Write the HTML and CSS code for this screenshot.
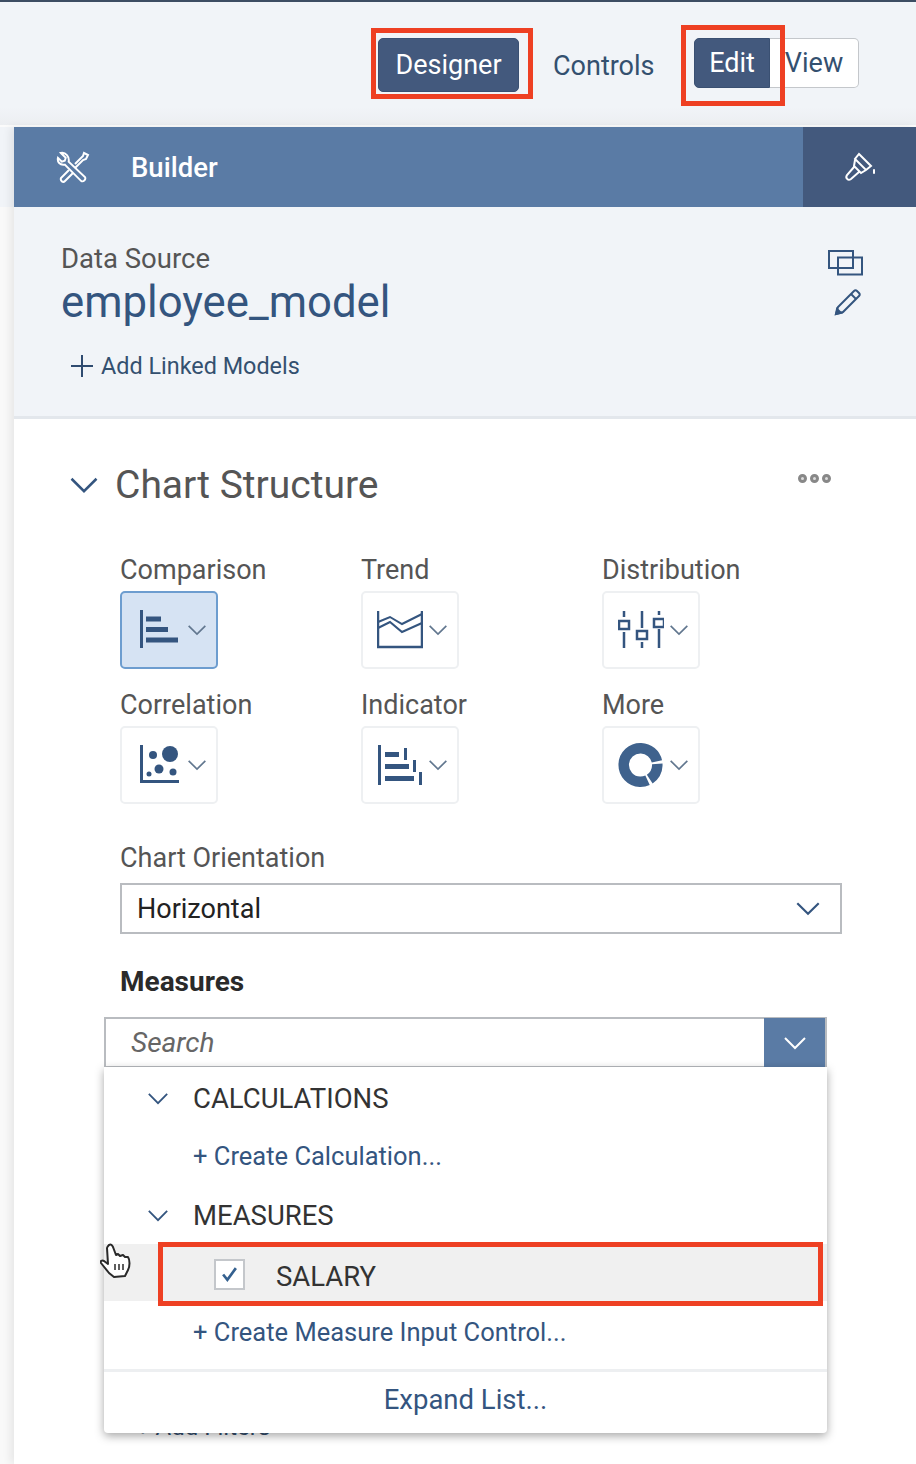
FILE: index.html
```html
<!DOCTYPE html>
<html lang="en">
<head>
    <meta charset="UTF-8">
    <meta name="viewport" content="width=device-width, initial-scale=1.0">
    <title>Chart Builder</title>
    <link rel="stylesheet" href="styles.css">
</head>
<body>
    <svg class="icon-defs" width="0" height="0">
        <symbol id="chev" viewBox="0 0 24 14"><path d="M2 2l10 10L22 2" fill="none" stroke="currentColor" stroke-width="2"/></symbol>
    </svg>

    <header class="topbar">
        <div class="marked marked-designer">
            <button class="btn-dark btn-designer">Designer</button>
        </div>
        <span class="top-link">Controls</span>
        <div class="segmented">
            <button class="seg seg-edit">Edit</button>
            <button class="seg seg-view">View</button>
            <span class="red-box red-edit"></span>
        </div>
    </header>

    <main class="panel">
        <div class="builder-bar">
            <svg class="tools-icon" viewBox="0 0 34 32" fill="none" stroke="#fff" stroke-width="2">
                <path d="M4 2l5 5-1 3-3 1-4-4c-1 4 2 8 7 7l17 17c2 1 5-1 4-4L12 11C13 6 9 1 4 2z" transform="translate(1 0) scale(.97)"/>
                <path d="M19 13l8-8 1-3 4 2-2 4-3 1-8 8M13 19l-8 8c-1 3 2 5 4 3l8-8"/>
            </svg>
            <span class="builder-title">Builder</span>
            <div class="brush-tab">
                <svg class="brush-icon" viewBox="0 0 32 32" fill="none" stroke="#fff" stroke-width="2">
                    <path d="M15 3l12 12-5 4-11-11zM11 9l-1 6 7 7 5-3M10 16l-7 8c-2 3 1 6 4 4l8-7"/>
                    <path d="M30 19v3" stroke-linecap="round"/>
                </svg>
            </div>
        </div>

        <section class="source">
            <div class="source-text">
                <div class="source-label">Data Source</div>
                <div class="source-name">employee_model</div>
                <div class="add-linked">
                    <svg class="plus-icon" viewBox="0 0 22 22"><path d="M11 0v22M0 11h22" stroke="#2f4b70" stroke-width="2"/></svg>
                    <span>Add Linked Models</span>
                </div>
            </div>
            <div class="source-actions">
                <svg class="copy-icon" viewBox="0 0 36 28" fill="none" stroke="#34557f" stroke-width="2">
                    <rect x="1" y="2" width="24" height="17"/>
                    <rect x="10" y="8.500" width="24" height="17"/>
                </svg>
                <svg class="pencil-icon" viewBox="0 0 28 28" fill="none" stroke="#34557f" stroke-width="2">
                    <path d="M2 26l2-7L20 3c1-1 2-1 3 0l2 2c1 1 1 2 0 3L9 24z"/>
                    <path d="M17 6l5 5"/>
                    <path d="M2 26l1-5 4 4z" fill="#34557f"/>
                </svg>
            </div>
        </section>

        <section class="structure">
            <div class="structure-head">
                <svg class="head-chev"><use href="#chev"/></svg>
                <h2>Chart Structure</h2>
                <div class="more-dots"><i></i><i></i><i></i></div>
            </div>

            <div class="type-grid">
                <div class="type">
                    <div class="type-label">Comparison</div>
                    <div class="tile tile-on">
                        <svg class="tile-icon" viewBox="0 0 40 40" fill="#34557f">
                            <rect x="0" y="0" width="3" height="38"/>
                            <rect x="6" y="6.500" width="15" height="5"/>
                            <rect x="6" y="17" width="22" height="5"/>
                            <rect x="6" y="27.500" width="32" height="5"/>
                        </svg>
                        <svg class="tile-chev"><use href="#chev"/></svg>
                    </div>
                </div>
                <div class="type">
                    <div class="type-label">Trend</div>
                    <div class="tile tile-wide">
                        <svg class="tile-icon" viewBox="0 0 46 40" fill="none" stroke="#34557f" stroke-width="2.500">
                            <path d="M1 1v36h44V1"/>
                            <path d="M1 12l12-5 12 7 20-10" stroke-width="2"/>
                            <path d="M1 18l12-6 12 10 20-9" stroke-width="2"/>
                        </svg>
                        <svg class="tile-chev"><use href="#chev"/></svg>
                    </div>
                </div>
                <div class="type">
                    <div class="type-label">Distribution</div>
                    <div class="tile tile-wide">
                        <svg class="tile-icon" viewBox="0 0 46 40" fill="none" stroke="#34557f" stroke-width="2.500">
                            <path d="M6 1v6M6 22v16M24 1v17M24 32v6M41 1v4M41 19v19"/>
                            <rect x="1" y="11" width="10" height="8"/>
                            <rect x="19" y="21" width="10" height="8"/>
                            <rect x="36" y="9" width="10" height="8"/>
                        </svg>
                        <svg class="tile-chev"><use href="#chev"/></svg>
                    </div>
                </div>
                <div class="type">
                    <div class="type-label">Correlation</div>
                    <div class="tile">
                        <svg class="tile-icon" viewBox="0 0 40 40" fill="#34557f">
                            <path d="M0 0h3v35h36v3H0z"/>
                            <circle cx="13" cy="10" r="4"/>
                            <circle cx="30" cy="9" r="8"/>
                            <circle cx="19" cy="24" r="4.500"/>
                            <circle cx="9" cy="29" r="2.500"/>
                            <circle cx="33" cy="27" r="3.500"/>
                        </svg>
                        <svg class="tile-chev"><use href="#chev"/></svg>
                    </div>
                </div>
                <div class="type">
                    <div class="type-label">Indicator</div>
                    <div class="tile tile-wide">
                        <svg class="tile-icon" viewBox="0 0 46 40" fill="#34557f">
                            <rect x="1" y="0" width="3" height="40"/>
                            <rect x="8" y="7" width="14" height="5"/>
                            <rect x="27" y="3" width="3" height="12"/>
                            <rect x="8" y="19" width="24" height="5"/>
                            <rect x="36" y="15" width="3" height="12"/>
                            <rect x="8" y="31" width="29" height="5"/>
                            <rect x="42" y="27" width="3" height="13"/>
                        </svg>
                        <svg class="tile-chev"><use href="#chev"/></svg>
                    </div>
                </div>
                <div class="type">
                    <div class="type-label">More</div>
                    <div class="tile tile-wide">
                        <svg class="tile-icon donut" viewBox="0 0 46 46" fill="none" stroke="#3f628d" stroke-width="10.500">
                            <circle cx="22.500" cy="23" r="16.800" stroke-dasharray="22 2.500 17.600 2.500 61" transform="rotate(-88 22.500 23)"/>
                        </svg>
                        <svg class="tile-chev"><use href="#chev"/></svg>
                    </div>
                </div>
            </div>

            <div class="field-label">Chart Orientation</div>
            <div class="select">
                <span>Horizontal</span>
                <svg class="select-chev"><use href="#chev"/></svg>
            </div>

            <div class="measures-label">Measures</div>

            <div class="measures">
                <div class="search">
                    <span class="search-text">Search</span>
                    <span class="search-btn"><svg class="search-chev"><use href="#chev"/></svg></span>
                </div>
                <div class="add-filters">+ Add Filters</div>

                <div class="popup">
                    <div class="popup-group">
                        <svg class="group-chev"><use href="#chev"/></svg>
                        <span>CALCULATIONS</span>
                    </div>
                    <div class="popup-link">+ Create Calculation...</div>
                    <div class="popup-group group-measures">
                        <svg class="group-chev"><use href="#chev"/></svg>
                        <span>MEASURES</span>
                    </div>
                    <div class="popup-item">
                        <span class="checkbox">
                            <svg viewBox="0 0 16 14" class="check-icon"><path d="M2 7l4 5 8-11" fill="none" stroke="#34608f" stroke-width="2.500"/></svg>
                        </span>
                        <span class="item-name">SALARY</span>
                        <span class="red-box red-salary"></span>
                    </div>
                    <div class="popup-link link-input">+ Create Measure Input Control...</div>
                    <div class="popup-foot">Expand List...</div>

                    <svg class="hand-cursor" viewBox="0 0 32 36" fill="#fff" stroke="#2a2a2a" stroke-width="2" stroke-linejoin="round">
                        <path d="M9 2c2-1 3 0 4 2l3 8 2-1 2 2 3-1 2 2 3 0c2 3 2 9 0 13l-3 6-11 1-5-4-8-10c-1-2 1-3 3-2l4 3L7 5c0-1 1-2 2-3z"/>
                        <path d="M15 21v6M19 21v6M23 21v6" stroke-width="1.500"/>
                    </svg>
                </div>
            </div>
        </section>
    </main>
</body>
</html>
```

FILE: styles.css
```css
* {
    box-sizing: border-box;
}
html, body {
    margin: 0;
    height: 1464px;
    overflow: hidden;
}
body {
    background: linear-gradient(#f1f4f8 207px, #f9f9f9 207px);
    font-family: Roboto, "Liberation Sans", sans-serif;
    color: #555;
    border-top: 2px solid #3d4d63;
}
.icon-defs {
    position: absolute;
}
button {
    font-family: inherit;
    cursor: pointer;
}

/* top bar */
.topbar {
    height: 125px;
    display: flex;
    align-items: flex-start;
    padding: 36px 57px 0 378px;
    background: linear-gradient(#f1f4f8 105px, #eceef1);
    border-bottom: 2px solid #fbfbfb;
}
.marked {
    position: relative;
}
.marked-designer::after {
    content: "";
    position: absolute;
    box-sizing: border-box;
    left: -7px;
    top: -10px;
    width: 162px;
    height: 71px;
    border: 5px solid #ee4023;
}
.btn-dark {
    background-color: #43597d;
    color: #fff;
    border: 1px solid #3a5072;
    border-radius: 5px;
}
.btn-designer {
    width: 141px;
    height: 54px;
    font-size: 27px;
    padding: 0;
}
.top-link {
    margin-left: 34px;
    width: 141px;
    margin-top: 10px;
    font-size: 27px;
    color: #34506f;
    line-height: 36px;
}
.segmented {
    display: flex;
    position: relative;
}
.seg {
    height: 50px;
    font-size: 27px;
    padding: 0;
}
.seg-edit {
    width: 76px;
    background-color: #43597d;
    color: #fff;
    border: 1px solid #3a5072;
    border-radius: 5px 0 0 5px;
}
.seg-view {
    width: 89px;
    background-color: #fff;
    color: #34506f;
    border: 1px solid #c4c7cb;
    border-left: 0;
    border-radius: 0 5px 5px 0;
}
.red-box {
    position: absolute;
    border: 5px solid #ee4023;
    pointer-events: none;
}
.red-edit {
    left: -13px;
    top: -13px;
    width: 104px;
    height: 81px;
}

/* panel */
.panel {
    margin-left: 14px;
    height: 1337px;
    background-color: #fff;
    box-shadow: -4px 0 8px rgba(0, 0, 0, 0.07);
}
.builder-bar {
    height: 80px;
    background-color: #5a7ba5;
    display: flex;
    align-items: center;
    padding-left: 42px;
    color: #fff;
}
.tools-icon {
    width: 34px;
    height: 32px;
}
.builder-title {
    margin-left: 41px;
    font-size: 27.500px;
    font-weight: 500;
}
.brush-tab {
    margin-left: auto;
    width: 113px;
    height: 100%;
    background-color: #43597d;
    display: flex;
    align-items: center;
    justify-content: center;
}
.brush-icon {
    width: 34px;
    height: 32px;
}
.source {
    height: 212px;
    background-color: #f1f4f8;
    border-bottom: 3px solid #e3e7ec;
    display: flex;
    justify-content: space-between;
    padding: 34px 52px 0 47px;
}
.source-label {
    font-size: 27.500px;
    line-height: 36px;
    color: #555;
}
.source-name {
    font-size: 43.700px;
    line-height: 50px;
    color: #34557f;
}
.add-linked {
    margin-top: 22px;
    margin-left: 10px;
    display: flex;
    align-items: center;
    gap: 8px;
    font-size: 23.400px;
    line-height: 34px;
    color: #34506f;
}
.plus-icon {
    width: 22px;
    height: 22px;
}
.source-actions {
    display: flex;
    flex-direction: column;
    align-items: center;
    gap: 11px;
    padding-top: 8px;
}
.copy-icon {
    width: 36px;
    height: 28px;
}
.pencil-icon {
    width: 28px;
    height: 28px;
    margin-left: 4px;
}

/* chart structure */
.structure {
    padding: 41px 74px 0 90px;
    height: 1045px;
}
.structure-head {
    display: flex;
    align-items: center;
    margin-left: -35px;
    height: 50px;
}
.head-chev {
    width: 30px;
    height: 18px;
    color: #34557f;
    margin-right: 16px;
}
.structure-head h2 {
    margin: 0;
    font-size: 39px;
    font-weight: 400;
    color: #555;
}
.more-dots {
    margin-left: auto;
    margin-right: 11px;
    margin-top: -14px;
    display: flex;
    gap: 3px;
}
.more-dots i {
    width: 9px;
    height: 9px;
    border-radius: 50%;
    border: 3px solid #888;
    background-color: #ddd;
}
.type-grid {
    margin-top: 42px;
    margin-left: 16px;
    display: grid;
    grid-template-columns: repeat(3, 241px);
    row-gap: 18px;
}
.type-label {
    font-size: 27px;
    line-height: 36px;
    color: #555;
}
.tile {
    margin-top: 3px;
    width: 98px;
    height: 78px;
    border: 2px solid #eef0f2;
    border-radius: 5px;
    background-color: #fff;
    display: flex;
    align-items: center;
    padding-left: 18px;
}
.tile-on {
    background-color: #d6e3f3;
    border-color: #6d9dcf;
}
.tile-wide {
    padding-left: 14px;
}
.tile-icon {
    width: 40px;
    height: 40px;
    flex: none;
}
.tile-wide .tile-icon {
    width: 46px;
}
.tile-wide .donut {
    height: 46px;
}
.tile-chev {
    margin-left: 7px;
    width: 20px;
    height: 12px;
    color: #62778f;
}
.tile-wide .tile-chev {
    margin-left: 5px;
}
.field-label {
    margin-top: 36px;
    margin-left: 16px;
    font-size: 27px;
    line-height: 36px;
    color: #555;
}
.select {
    margin-top: 7px;
    margin-left: 16px;
    width: 722px;
    height: 51px;
    border: 2px solid #b9bcc0;
    display: flex;
    align-items: center;
    justify-content: space-between;
    padding: 0 19px 0 15px;
    font-size: 27px;
    color: #222;
}
.select-chev {
    width: 26px;
    height: 15px;
    color: #34557f;
}
.measures-label {
    margin-top: 30px;
    margin-left: 16px;
    font-size: 28px;
    line-height: 36px;
    font-weight: 700;
    color: #2a2a2a;
}

/* measures search and its popup */
.measures {
    position: relative;
    margin-top: 17px;
}
.search {
    width: 723px;
    height: 51px;
    border: 2px solid #b9bcc0;
    display: flex;
    align-items: center;
    justify-content: space-between;
    background-color: #fff;
}
.search-text {
    margin-left: 25px;
    font-size: 28px;
    font-style: italic;
    color: #666;
}
.search-btn {
    width: 61px;
    height: 49px;
    background-color: #5a7ba5;
    display: flex;
    align-items: center;
    justify-content: center;
}
.search-chev {
    width: 24px;
    height: 14px;
    color: #fff;
}
.add-filters {
    margin-top: 345px;
    margin-left: 32px;
    font-size: 24px;
    color: #34506f;
}
.popup {
    position: absolute;
    left: 0;
    top: 50px;
    width: 723px;
    height: 366px;
    padding-top: 1px;
    background-color: #fff;
    box-shadow: 0 3px 10px rgba(0, 0, 0, 0.35);
    border-radius: 0 0 4px 4px;
    font-size: 27.500px;
}
.popup-group {
    height: 60px;
    display: flex;
    align-items: center;
    color: #333;
    padding-left: 43px;
    gap: 24px;
}
.group-chev {
    width: 22px;
    height: 13px;
    color: #34557f;
}
.popup-link {
    height: 56px;
    display: flex;
    align-items: center;
    padding-left: 89px;
    font-size: 25.500px;
    color: #34557f;
}
.group-measures {
    margin-top: 1px;
    height: 60px;
}
.popup-item {
    position: relative;
    height: 57px;
    margin-top: -1px;
    padding-top: 3px;
    background-color: #f0f0f0;
    display: flex;
    align-items: center;
    padding-left: 110px;
    gap: 31px;
    color: #333;
}
.item-name {
    margin-top: 4px;
}
.red-salary {
    left: 54px;
    top: -2px;
    width: 665px;
    height: 64px;
}
.checkbox {
    width: 31px;
    height: 31px;
    border: 2px solid #c4c7cb;
    background-color: #fff;
    display: flex;
    align-items: center;
    justify-content: center;
}
.check-icon {
    width: 17px;
    height: 15px;
}
.link-input {
    height: 56px;
    margin-top: 3px;
}
.popup-foot {
    margin-top: 9px;
    border-top: 3px solid #edeff1;
    height: 58px;
    display: flex;
    align-items: center;
    justify-content: center;
    color: #34557f;
}
.hand-cursor {
    position: absolute;
    left: -4px;
    top: 176px;
    width: 32px;
    height: 36px;
}
```
